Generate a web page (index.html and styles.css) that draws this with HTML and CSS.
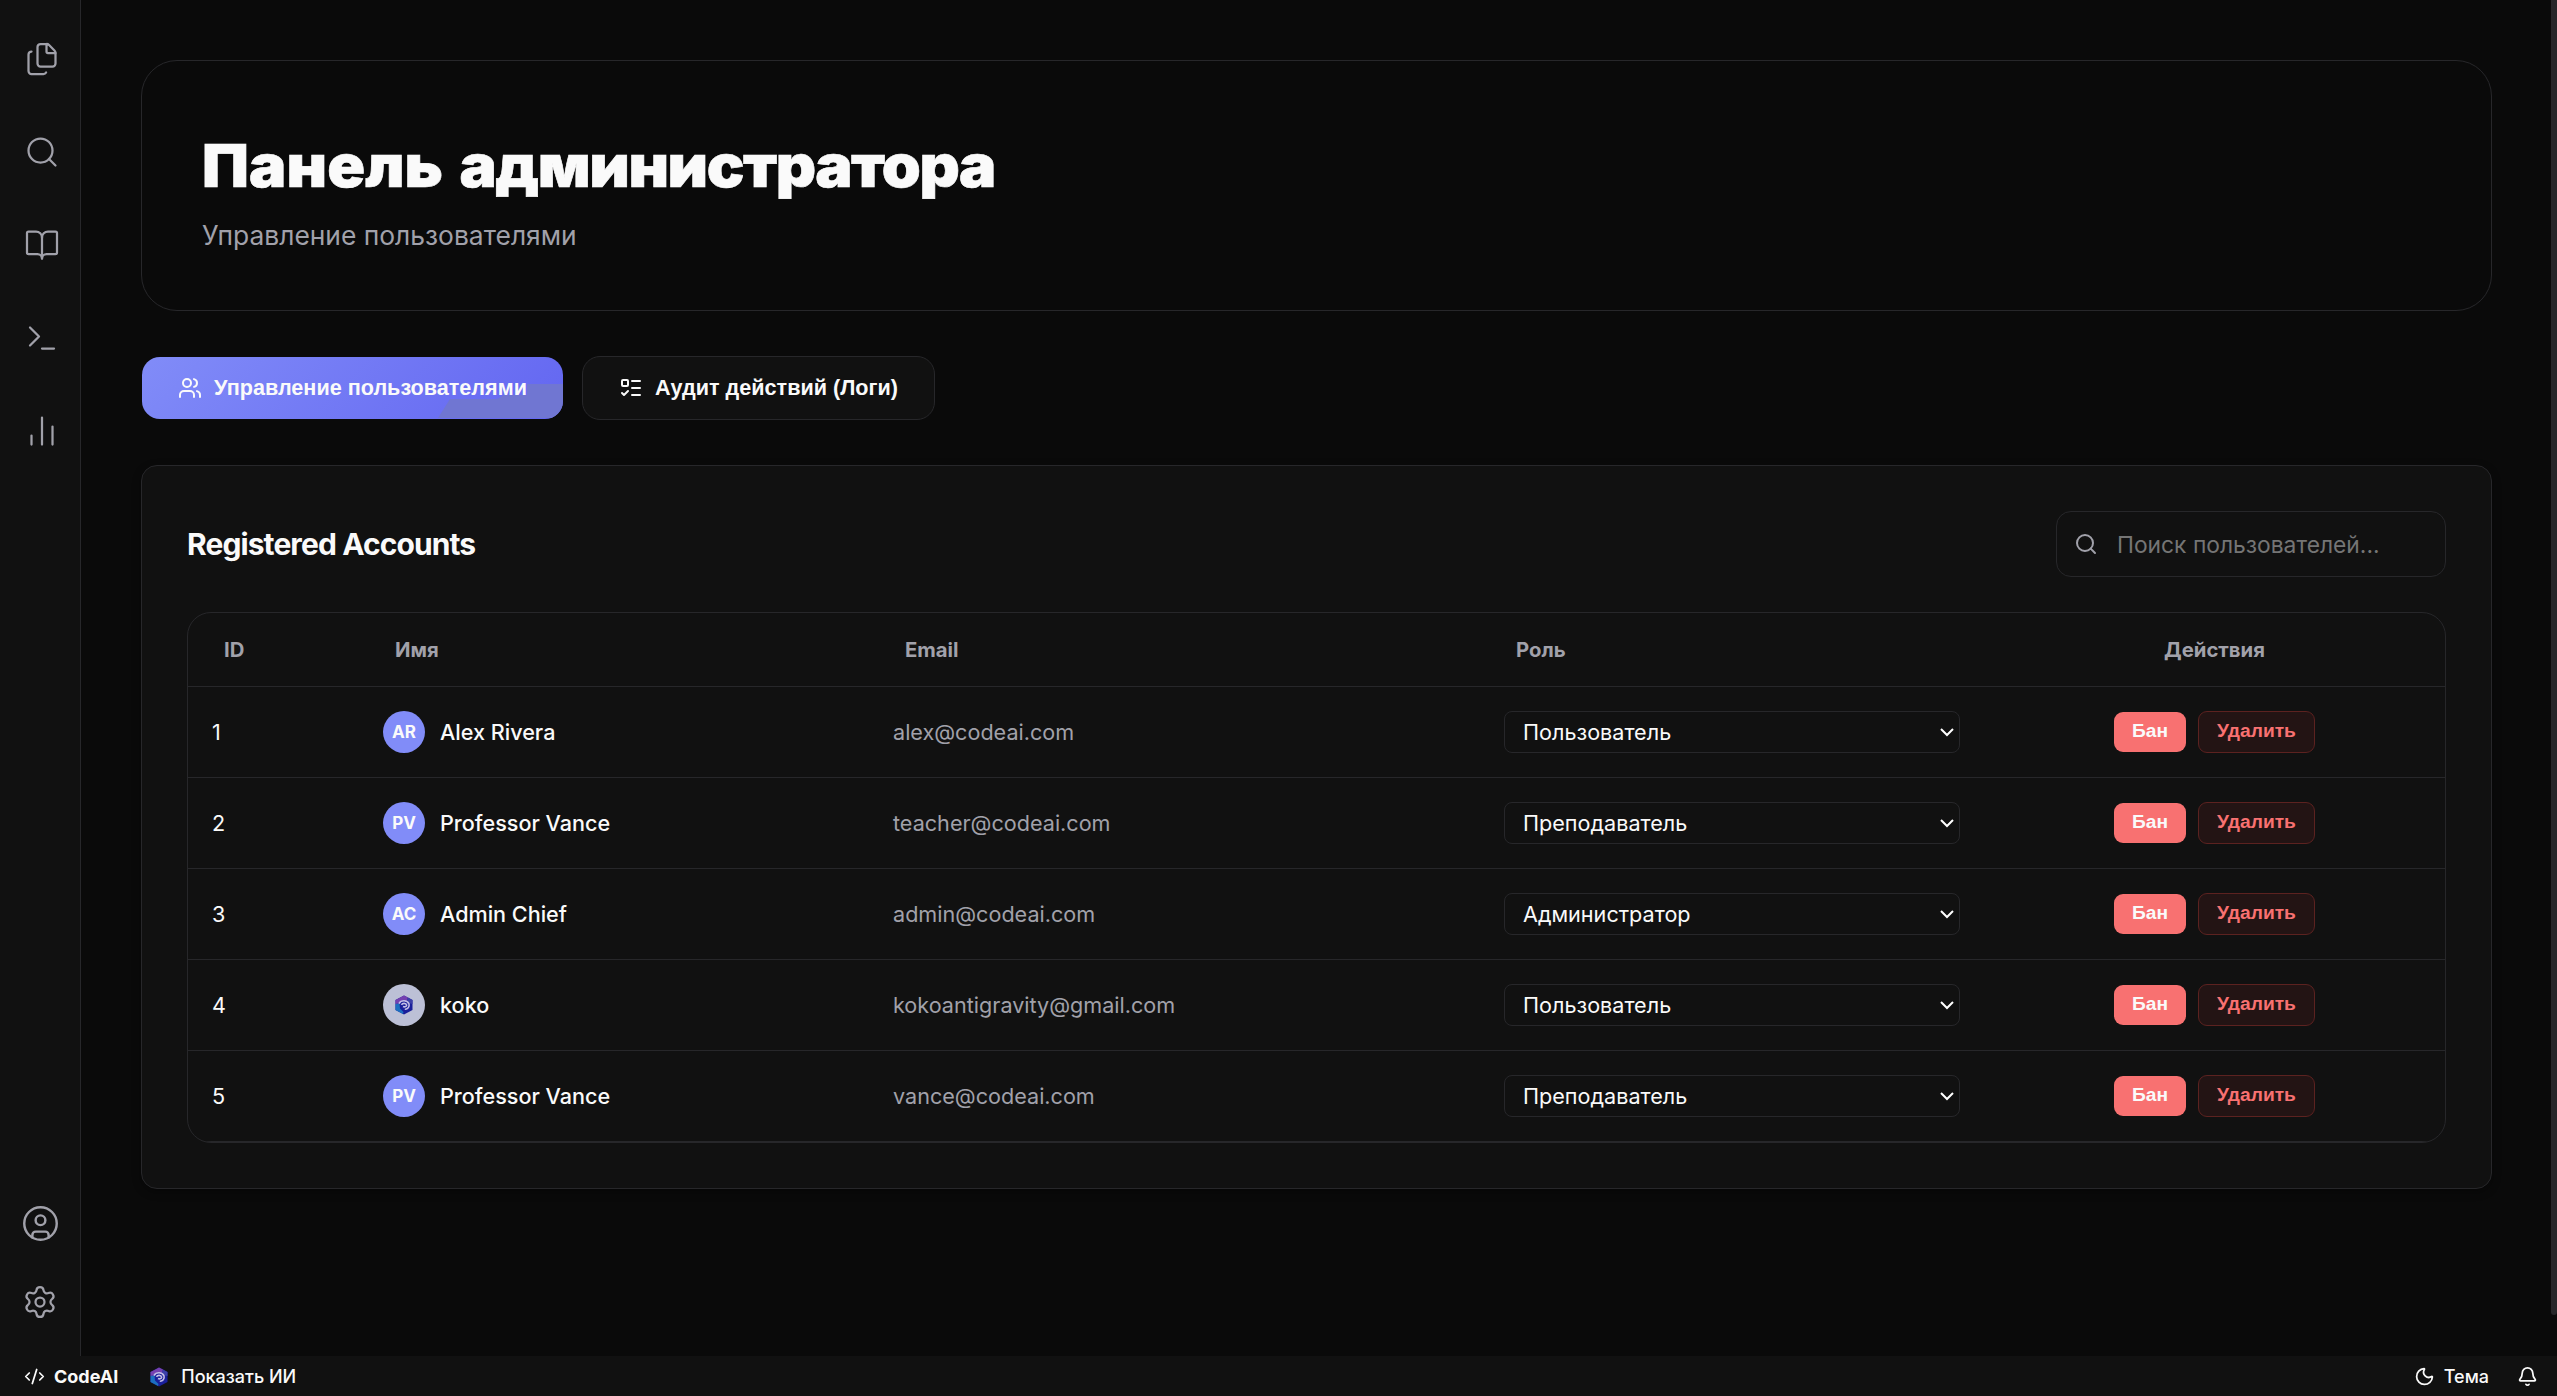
FILE: index.html
```html
<!DOCTYPE html>
<html lang="ru">
<head>
<meta charset="utf-8">
<title>CodeAI</title>
<link rel="stylesheet" href="styles.css">
</head>
<body>
<svg class="defs" aria-hidden="true">
  <symbol id="logo" viewBox="0 0 20 20">
    <path d="M10 0.5 18.500 5v10L10 19.500 1.500 15V5z" fill="#1a1f9a"/>
    <path d="M10 0.500 14 2.600 13 6 8 5.500 5.500 8.500 1.500 9V5z" fill="#7440b0"/>
    <path d="M14 2.600 18.500 5v4l-4-1-1.500-2z" fill="#3b3fa8"/>
    <path d="M1.500 9 5.500 8.500l.5 5L9.500 17 9 19 1.500 15z" fill="#1c6fc0"/>
    <path d="M5 8.600C7 4.800 13.200 4.800 15 8.800c.8 3.200-1.400 5.700-4.200 5.400M7.500 9.800c1-2 4.500-2 5.200.4-.4 1.800-2.400 2-3.700 1.300" fill="none" stroke="#c3bde6" stroke-width="1.600"/>
  </symbol>
</svg>
<div class="app">
  <div class="workspace">
    <nav class="sidebar">
      <div class="nav-top">
        <svg class="icon" viewBox="0 0 24 24"><path d="M15 2h-4a2 2 0 0 0-2 2v11a2 2 0 0 0 2 2h8a2 2 0 0 0 2-2V8"/><path d="M16.706 2.706A2.4 2.4 0 0 0 15 2v5a1 1 0 0 0 1 1h5a2.4 2.4 0 0 0-.706-1.706z"/><path d="M5 7a2 2 0 0 0-2 2v11a2 2 0 0 0 2 2h8a2 2 0 0 0 1.732-1"/></svg>
        <svg class="icon" viewBox="0 0 24 24"><circle cx="11" cy="11" r="8"/><path d="m21 21-4.340-4.340"/></svg>
        <svg class="icon" viewBox="0 0 24 24"><path d="M12 7v14"/><path d="M3 18a1 1 0 0 1-1-1V4a1 1 0 0 1 1-1h5a4 4 0 0 1 4 4 4 4 0 0 1 4-4h5a1 1 0 0 1 1 1v13a1 1 0 0 1-1 1h-6a3 3 0 0 0-3 3 3 3 0 0 0-3-3z"/></svg>
        <svg class="icon" viewBox="0 0 24 24"><path d="M12 19h8"/><path d="m4 17 6-6-6-6"/></svg>
        <svg class="icon" viewBox="0 0 24 24"><path d="M5 21v-6M12 21V3M19 21V9"/></svg>
      </div>
      <div class="nav-bottom">
        <svg class="icon icon-user" viewBox="0 0 24 24"><circle cx="12" cy="12" r="10"/><circle cx="12" cy="10" r="3"/><path d="M7 20.662V19a2 2 0 0 1 2-2h6a2 2 0 0 1 2 2v1.662"/></svg>
        <svg class="icon" viewBox="0 0 24 24"><path d="M9.671 4.136a2.340 2.340 0 0 1 4.659 0 2.340 2.340 0 0 0 3.319 1.915 2.340 2.340 0 0 1 2.330 4.033 2.340 2.340 0 0 0 0 3.831 2.340 2.340 0 0 1-2.330 4.033 2.340 2.340 0 0 0-3.319 1.915 2.340 2.340 0 0 1-4.659 0 2.340 2.340 0 0 0-3.320-1.915 2.340 2.340 0 0 1-2.330-4.033 2.340 2.340 0 0 0 0-3.831A2.340 2.340 0 0 1 6.350 6.051a2.340 2.340 0 0 0 3.319-1.915"/><circle cx="12" cy="12" r="3"/></svg>
      </div>
    </nav>
    <main class="main">
      <header class="hero">
        <h1><span class="lead">Панель</span> администратора</h1>
        <p>Управление пользователями</p>
      </header>
      <div class="tabs">
        <button class="tab tab-active"><svg class="icon" viewBox="0 0 24 24"><path d="M16 21v-2a4 4 0 0 0-4-4H6a4 4 0 0 0-4 4v2"/><path d="M16 3.128a4 4 0 0 1 0 7.744"/><path d="M22 21v-2a4 4 0 0 0-3-3.870"/><circle cx="9" cy="7" r="4"/></svg><span>Управление пользователями</span></button>
        <button class="tab"><svg class="icon" viewBox="0 0 24 24"><path d="M13 5h8M13 12h8M13 19h8"/><path d="m3 17 2 2 4-4"/><rect x="3" y="4" width="6" height="6" rx="1"/></svg><span>Аудит действий (Логи)</span></button>
      </div>
      <section class="card">
        <div class="card-head">
          <h2>Registered Accounts</h2>
          <label class="search"><svg class="icon" viewBox="0 0 24 24"><circle cx="11" cy="11" r="8"/><path d="m21 21-4.340-4.340"/></svg><span>Поиск пользователей...</span></label>
        </div>
        <div class="table">
          <div class="row row-head"><div>ID</div><div>Имя</div><div>Email</div><div>Роль</div><div class="actions">Действия</div></div>
          <div class="row"><div>1</div><div class="user"><span class="avatar">AR</span><b>Alex Rivera</b></div><div class="mail">alex@codeai.com</div><div><div class="select"><span>Пользователь</span><svg class="chevron" viewBox="0 0 14 10"><path d="m1 2 6 6 6-6"/></svg></div></div><div class="actions"><button class="ban">Бан</button><button class="del">Удалить</button></div></div>
          <div class="row"><div>2</div><div class="user"><span class="avatar">PV</span><b>Professor Vance</b></div><div class="mail">teacher@codeai.com</div><div><div class="select"><span>Преподаватель</span><svg class="chevron" viewBox="0 0 14 10"><path d="m1 2 6 6 6-6"/></svg></div></div><div class="actions"><button class="ban">Бан</button><button class="del">Удалить</button></div></div>
          <div class="row"><div>3</div><div class="user"><span class="avatar">AC</span><b>Admin Chief</b></div><div class="mail">admin@codeai.com</div><div><div class="select"><span>Администратор</span><svg class="chevron" viewBox="0 0 14 10"><path d="m1 2 6 6 6-6"/></svg></div></div><div class="actions"><button class="ban">Бан</button><button class="del">Удалить</button></div></div>
          <div class="row"><div>4</div><div class="user"><span class="avatar avatar-logo"><svg class="logo" viewBox="0 0 20 20"><use href="#logo"/></svg></span><b>koko</b></div><div class="mail">kokoantigravity@gmail.com</div><div><div class="select"><span>Пользователь</span><svg class="chevron" viewBox="0 0 14 10"><path d="m1 2 6 6 6-6"/></svg></div></div><div class="actions"><button class="ban">Бан</button><button class="del">Удалить</button></div></div>
          <div class="row"><div>5</div><div class="user"><span class="avatar">PV</span><b>Professor Vance</b></div><div class="mail">vance@codeai.com</div><div><div class="select"><span>Преподаватель</span><svg class="chevron" viewBox="0 0 14 10"><path d="m1 2 6 6 6-6"/></svg></div></div><div class="actions"><button class="ban">Бан</button><button class="del">Удалить</button></div></div>
        </div>
      </section>
    </main>
    <div class="scrollbar"></div>
  </div>
  <footer class="status">
    <svg class="icon" viewBox="0 0 24 24"><path d="m18 16 4-4-4-4M6 8l-4 4 4 4M14.500 4l-5 16"/></svg>
    <strong>CodeAI</strong>
    <svg class="logo" viewBox="0 0 20 20"><use href="#logo"/></svg>
    <span class="ai">Показать ИИ</span>
    <svg class="icon moon" viewBox="0 0 24 24"><path d="M20.985 12.486a9 9 0 1 1-9.473-9.472c.405-.022.617.460.402.803a6 6 0 0 0 8.268 8.268c.344-.215.825-.004.803.401"/></svg>
    <span class="theme">Тема</span>
    <svg class="icon bell" viewBox="0 0 24 24"><path d="M10.268 21a2 2 0 0 0 3.464 0"/><path d="M3.262 15.326A1 1 0 0 0 4 17h16a1 1 0 0 0 .740-1.673C19.410 13.956 18 12.499 18 8A6 6 0 0 0 6 8c0 4.499-1.411 5.956-2.738 7.326"/></svg>
  </footer>
</div>
</body>
</html>
```
FILE: styles.css
```css
* { box-sizing: border-box; margin: 0; }
html, body { height: 1396px; overflow: hidden; }
body { background: #0a0a0a; color: #fafafa; font-family: Inter, "Liberation Sans", sans-serif; font-size: 21.6px; }
button { font-family: "Liberation Sans", Arial, sans-serif; font-weight: 700; color: #fafafa; border: 0; padding: 0; }
.defs { display: none; }
.app { display: flex; flex-direction: column; height: 1396px; }
.workspace { display: flex; height: 1356px; }
.icon { width: 36px; height: 36px; flex: none; fill: none; stroke: currentColor; stroke-width: 1.5; stroke-linecap: round; stroke-linejoin: round; }

.sidebar { width: 81px; flex: none; background: #111; border-right: 1px solid #27272a; color: #a1a1aa; display: flex; flex-direction: column; justify-content: space-between; padding: 41px 0 36px; }
.nav-top { display: flex; flex-direction: column; gap: 57px; padding-left: 24px; }
.nav-bottom { display: flex; flex-direction: column; align-items: center; gap: 41px; }
.icon-user { width: 39px; height: 39px; }

.main { flex: 1; padding: 60px 59px 0 60px; }
.scrollbar { width: 6px; height: 1315px; background: #27272a; border-radius: 0 0 3px 3px; }

.hero { height: 251px; border: 1px solid #27272a; border-radius: 36px; padding: 69px 60px 0; }
.hero h1 { width: max-content; font-size: 59px; font-weight: 900; line-height: 72px; letter-spacing: -1.4px; word-spacing: 5px; white-space: nowrap; -webkit-text-stroke: 0.6px #fafafa; transform: scaleX(1.06); transform-origin: 0 50%; }
.hero .lead { letter-spacing: 0.1px; }
.hero p { font-size: 26.4px; line-height: 40px; margin-top: 13px; color: #a1a1aa; }

.tabs { display: flex; align-items: center; gap: 19px; height: 64px; margin: 45px 0; padding-left: 1px; }
.tab { width: 353px; height: 64px; border: 1px solid #27272a; border-radius: 18px; background: #111; font-size: 21.6px; display: flex; align-items: center; justify-content: center; gap: 12px; white-space: nowrap; }
.tab .icon { width: 24px; height: 24px; stroke-width: 2; }
.tab-active { width: 421px; height: 62px; border: 0; background: linear-gradient(135deg, #818cf8, #6366f1); position: relative; isolation: isolate; overflow: hidden; }
/* muted sheen in the lower right corner of the active tab */
.tab-active::after { content: ""; position: absolute; inset: 0; z-index: -1; background: #7076d2; clip-path: polygon(385px 27px, 421px 27px, 421px 61px, 296px 61px, 308px 42px, 355px 42px, 362px 38px, 385px 38px); }

.card { height: 724px; background: #111; border: 1px solid #27272a; border-radius: 16px; padding: 45px; box-shadow: 0 3px 9px rgba(0, 0, 0, .35); }
.card-head { display: flex; align-items: center; justify-content: space-between; height: 66px; margin-bottom: 35px; }
h2 { font-size: 30px; letter-spacing: -0.9px; font-weight: 700; }
.search { width: 390px; height: 66px; border: 1px solid #27272a; border-radius: 15px; padding-left: 17px; display: flex; align-items: center; gap: 19px; color: #757575; font-size: 22.8px; }
.search .icon { width: 24px; height: 24px; color: #a1a1aa; stroke-width: 2; }

.table { border: 1px solid #27272a; border-radius: 24px; overflow: hidden; }
.row { display: grid; grid-template-columns: 171px 510px 611px 504px 1fr; align-items: center; height: 91px; border-bottom: 1px solid #27272a; }
.row > div { padding: 0 24px; }
.row-head { height: 74px; font-size: 20.3px; font-weight: 700; color: #a1a1aa; }
.row-head > div { padding: 0 36px; }
.user { display: flex; align-items: center; gap: 15px; }
.user b { font-weight: 500; }
.avatar { width: 42px; height: 42px; border-radius: 50%; background: #818cf8; font-size: 17px; font-weight: 700; display: flex; align-items: center; justify-content: center; }
.avatar-logo { background: #bcc0d6; }
.logo { width: 20px; height: 20px; flex: none; }
.mail { color: #a1a1aa; }
.select { height: 42px; border: 1px solid #27272a; border-radius: 8px; display: flex; align-items: center; justify-content: space-between; padding: 0 5px 0 18px; }
.chevron { width: 14px; height: 10px; fill: none; stroke: #fff; stroke-width: 2; }
.row .actions { display: flex; justify-content: center; align-items: center; gap: 12px; }
.ban, .del { font-size: 19.2px; padding-bottom: 2px; }
.ban { width: 72px; height: 40px; border-radius: 9px; background: #f87171; }
.del { width: 117px; height: 42px; border-radius: 9px; background: #231414; border: 1px solid #5c2220; color: #f87171; }

.status { height: 40px; background: #111; display: flex; align-items: center; padding: 1px 19px 0 24px; font-size: 18px; }
.status .icon { width: 21px; height: 21px; stroke-width: 2; }
.status strong { margin: 0 31px 0 9px; font-weight: 700; }
.ai { margin-left: 12px; font-weight: 500; }
.status .moon { margin-left: auto; }
.theme { margin: 0 28px 0 9px; font-weight: 500; }
```
